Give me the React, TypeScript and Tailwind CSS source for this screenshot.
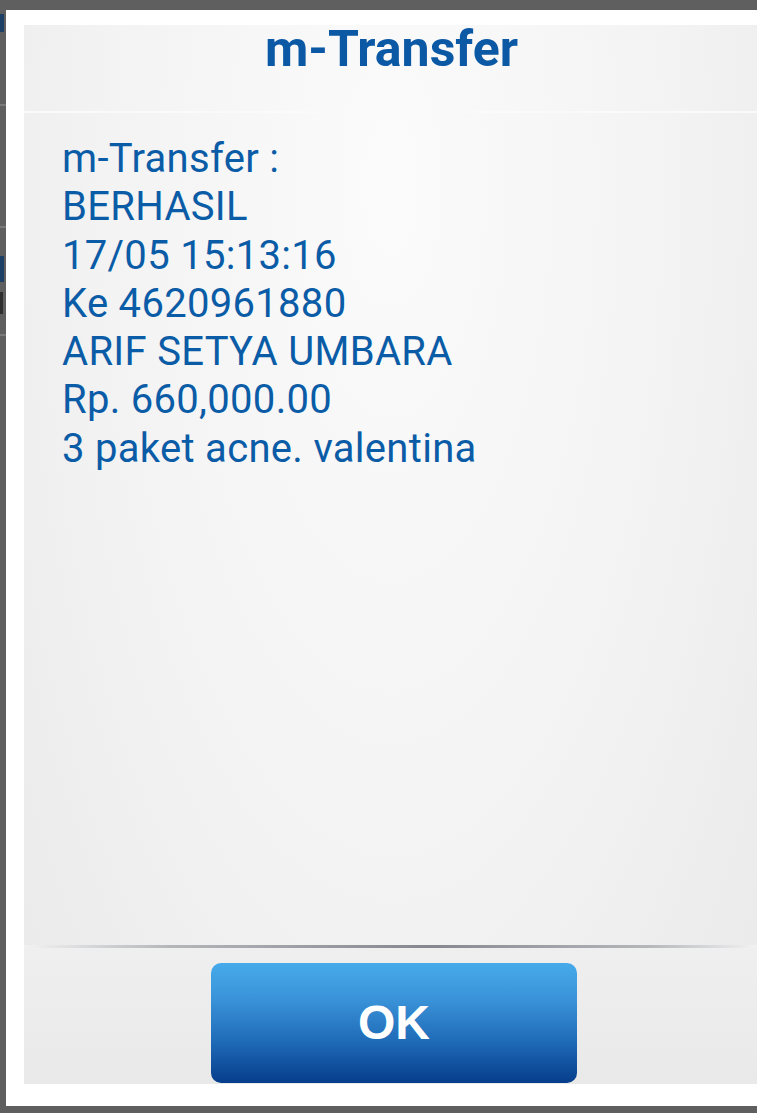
import React from "react";

const lines = [
  "m-Transfer :",
  "BERHASIL",
  "17/05 15:13:16",
  "Ke 4620961880",
  "ARIF SETYA UMBARA",
  "Rp. 660,000.00",
  "3 paket acne. valentina",
];

export default function App() {
  return (
    <div className="w-[757px] h-[1113px] bg-[#5f5f5f] flex overflow-hidden" style={{ fontFamily: "Roboto, 'Noto Sans', sans-serif" }}>
      {/* background app strip */}
      <div className="w-[6px] shrink-0 flex flex-col pt-[14px]">
        <div className="h-[18px] w-[4px] bg-[#1d3f66]" />
        <div className="h-[72px]" />
        <div className="h-[2px] bg-[#7a7a7a]" />
        <div className="h-[120px]" />
        <div className="h-[2px] bg-[#7a7a7a]" />
        <div className="h-[28px]" />
        <div className="h-[26px] w-[4px] bg-[#1d3f66]" />
        <div className="h-[10px]" />
        <div className="h-[22px] w-[3px] bg-[#2e2e2e]" />
        <div className="h-[20px]" />
        <div className="h-[2px] bg-[#7a7a7a]" />
      </div>
      {/* dialog */}
      <div className="mt-[10px] h-[1096px] flex-1 bg-white pl-[18px] pt-[15px]">
        <div className="h-[1059px] flex flex-col bg-[radial-gradient(ellipse_at_50%_15%,#fbfbfb_0%,#f3f3f3_55%,#e9e9e9_100%)]">
          <div className="h-[88px] flex justify-center pt-[2px] border-b-2 border-[#fafafa]">
            <div className="text-[50px] leading-[44px] font-bold text-[#0b58a5] ml-[2px]">m-Transfer</div>
          </div>
          <div className="flex-1 flex flex-col pl-[38px] pt-[22px]">
            {lines.map((l) => (
              <div key={l} className="text-[40px] leading-[48.3px] tracking-[0.3px] text-[#0b5ca7] whitespace-nowrap">
                {l}
              </div>
            ))}
          </div>
          <div className="h-[3px] bg-[linear-gradient(to_right,#f2f2f2_0%,#b4b6ba_20%,#85888e_55%,#b4b6ba_85%,#f2f2f2_100%)]" />
          <div className="h-[136px] pt-[15px] pl-[187px] bg-[linear-gradient(to_bottom,#efefef,#e9e9e9)]">
            <div className="w-[366px] h-[120px] rounded-[10px] bg-[linear-gradient(to_bottom,#46aaea_0%,#3a93d8_30%,#1f6bb8_65%,#063d8b_100%)] flex items-center justify-center">
              <span className="text-white text-[48px] font-bold leading-none" style={{ fontFamily: "'Liberation Sans', Arial, sans-serif" }}>OK</span>
            </div>
          </div>
        </div>
      </div>
    </div>
  );
}
